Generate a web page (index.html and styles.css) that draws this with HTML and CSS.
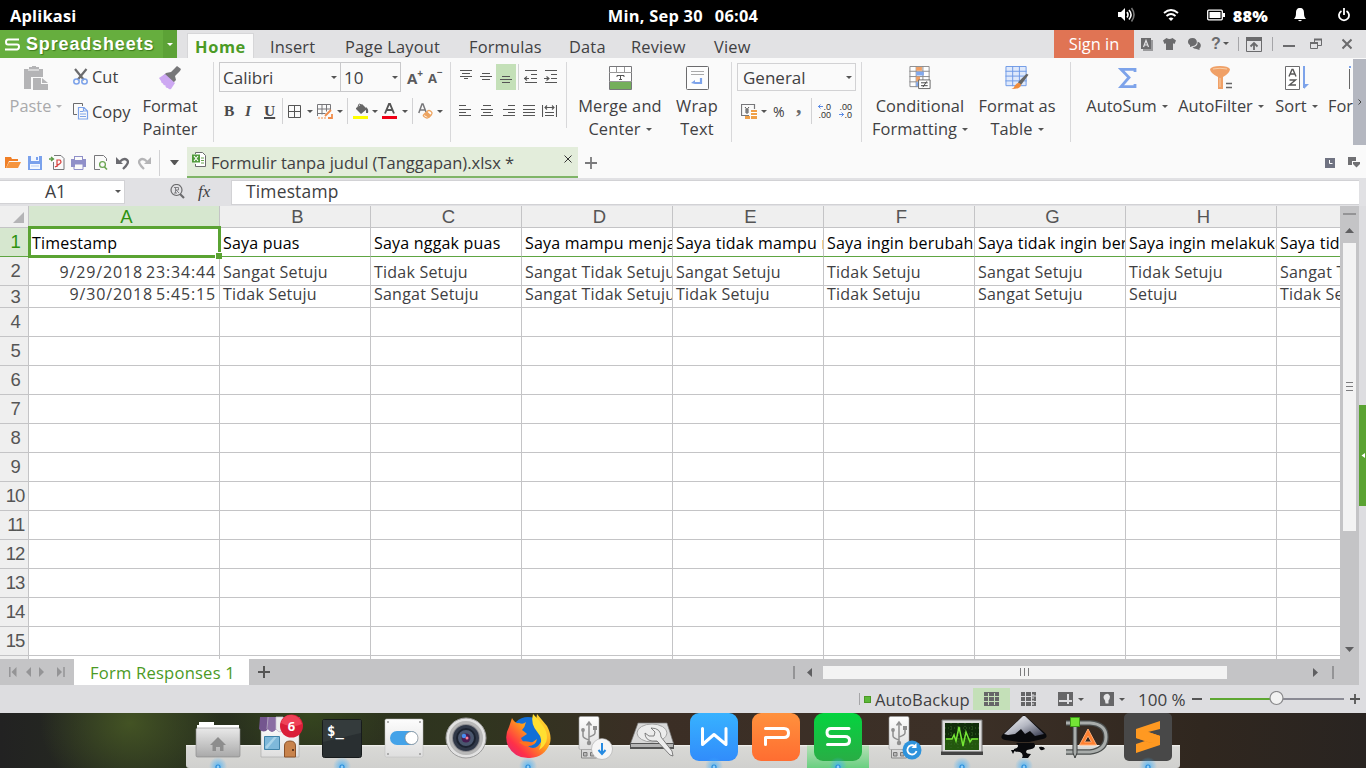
FILE: index.html
```html
<!DOCTYPE html>
<html lang="id">
<head>
<meta charset="utf-8">
<title>Spreadsheets</title>
<link rel="stylesheet" href="styles.css">
</head>
<body>
<header class="panel">
  <span class="panel-left">Aplikasi</span>
  <span class="panel-clock"><span>Min, Sep 30</span><span>06:04</span></span>
  <span class="panel-tray">
    <svg width="20" height="16" viewBox="0 0 20 16" fill="none" stroke="#fff" stroke-width="1.6"><path d="M1 5h3l4-4v13l-4-4H1z" fill="#fff" stroke="none"/><path d="M10 5q2 2.700 0 5.500M12 3q4 4.700 0 9.500"/><path d="M14.500 1q5 6.700 0 13.500" stroke="#777"/></svg>
    <svg width="16" height="16" viewBox="0 0 16 16" fill="none" stroke="#fff" stroke-width="1.900"><path d="M1 6q7-6 14 0M3.500 9q4.500-4 9 0"/><path d="M5.500 11.500q2.500-2 5 0L8 14z" fill="#fff" stroke="none"/></svg>
    <svg width="18" height="12" viewBox="0 0 18 12"><rect x=".7" y="1.200" width="14.600" height="9.600" rx="1" fill="none" stroke="#fff" stroke-width="1.300"/><path d="M2.500 3h11v6h-11z" fill="#fff"/><path d="M16 4h2v4h-2z" fill="#fff"/></svg>
    <b>88%</b>
    <svg width="12" height="16" viewBox="0 0 12 16" fill="#fff"><path d="M6 1c3 0 4 2 4 5 0 3 .5 4 2 6H0c1.500-2 2-3 2-6 0-3 1-5 4-5zM4 13h4q-2 2.500-4 0z"/></svg>
    <svg width="12" height="14" viewBox="0 0 12 14" fill="none" stroke="#fff" stroke-width="1.800"><path d="M3.500 3a5 5 0 1 0 5 0M6 0v7"/></svg>
  </span>
</header>

<nav class="titlebar">
  <div class="brand"><svg width="15" height="13" viewBox="0 0 15 13" fill="none" stroke="#fff" stroke-width="2"><path d="M14 1.500H3Q1 1.500 1 4t2 2.500h9q2 0 2 2.300T12 11.500H0"/></svg><span>Spreadsheets</span></div>
  <div class="brand-more"><i class="caret white"></i></div>
  <div class="tabs"><b class="tab-home">Home</b><span>Insert</span><span>Page Layout</span><span>Formulas</span><span>Data</span><span>Review</span><span>View</span></div>
  <div class="signin">Sign in</div>
  <div class="wintools">
    <svg width="12" height="13" viewBox="0 0 12 13"><path d="M2 2h10v11H2z" fill="#9a9a9c"/><path d="M0 0h10v11H0z" fill="#6b6b6d"/><path d="M2.500 9 5 2.500 7.500 9M3.500 7h3" fill="none" stroke="#e2e2e4" stroke-width="1.200"/></svg>
    <svg width="13" height="12" viewBox="0 0 13 12"><path d="M3.500 0q3 2 6 0L13 2.500 11.500 6 10 5.200V12H3V5.200L1.500 6 0 2.500z" fill="#6b6b6d"/></svg>
    <svg width="13" height="12" viewBox="0 0 13 12" fill="#6b6b6d"><path d="M4.500 0C10 0 10.500 7 5 8L2 9V7C-1 5.500-1 0 4.500 0z"/><path d="M9.500 3.800c4 .5 4 5.500 2 6.500v1.700l-3-1q-3 0-4-2c4 0 5.500-2.500 5-5.200z"/></svg>
    <span class="help">?<i class="caret"></i></span>
    <i class="bar"></i>
    <svg width="16" height="15" viewBox="0 0 16 15" fill="none" stroke="#6b6b6d"><path d="M.5.500h15v14H.5z"/><path d="M0 0h16v4H0z" fill="#6b6b6d" stroke="none"/><path d="M8 13V7M4.500 9.500 8 6l3.500 3.500" stroke-width="1.800"/></svg>
    <i class="bar"></i>
    <svg width="12" height="12" viewBox="0 0 12 12"><path d="M0 7h12v2H0z" fill="#6b6b6d"/></svg>
    <svg width="12" height="12" viewBox="0 0 12 12" fill="none" stroke="#6b6b6d"><path d="M4.500 4V1.500h7v6H8" /><path d="M.5 4.500h7v6h-7z"/><path d="M4 1.500h8M0 5h8" stroke-width="2"/></svg>
    <svg width="10" height="12" viewBox="0 0 10 12"><path d="M.5 1.500l9 9M9.500 1.500l-9 9" stroke="#6b6b6d" stroke-width="2"/></svg>
  </div>
</nav>

<section class="ribbon">
  <div class="group clip">
    <div class="big muted"><svg width="24" height="24" viewBox="0 0 24 24" fill="#b4b4b6"><path d="M0 3h5V1h3V0h4v1h3v2h4v8H7v12H0z"/><path d="M4 4h11" stroke="#fafafa"/><path d="M9 12h8v6h7v6H9z"/><path d="m18 12 6 5h-6z"/></svg><span>Paste<i class="caret"></i></span></div>
    <div class="pair">
      <div><svg width="16" height="18" viewBox="0 0 16 18" fill="none"><path d="M2 1l9 11M13.500 1l-9 11" stroke="#6b6b6d" stroke-width="2.200"/><ellipse cx="3.500" cy="13.500" rx="2.700" ry="2.500" stroke="#7da3ea" stroke-width="1.500"/><ellipse cx="11.500" cy="13.500" rx="2.700" ry="2.500" stroke="#7da3ea" stroke-width="1.500"/></svg>Cut</div>
      <div><svg width="16" height="17" viewBox="0 0 16 17" fill="none"><path d="M4 11.500H.5V.5h9V3" stroke="#6b6b6d"/><path d="M5.500 4.500h5.500l3.500 3.500v8h-9zM10.500 4.500V8H14M7 8.500h3M7 11h6M7 13.500h6" stroke="#7da3ea" stroke-width="1.200"/></svg>Copy</div>
    </div>
    <div class="big"><svg width="24" height="24" viewBox="0 0 24 24"><path d="m13 6 5-5 1-1 4 3-1 2-5 5 1 4-4 4-9-8 3-3z" fill="#777779"/><path d="M7 8 17 17l-4 6q-2 1-3-1h-1q-2-1-1.500-2.500Q5 19.500 5 17.500 3 17 3 15L1 12z" fill="#cda8f2"/></svg><span>Format<br>Painter</span></div>
  </div>

  <div class="group font">
    <div class="selects"><span>Calibri<i class="caret"></i></span><span>10<i class="caret"></i></span>
      <em>A<sup>+</sup></em><em class="small">A<sup>−</sup></em></div>
    <div class="tools font-tools">
      <b class="serif">B</b><i class="serif">I</i><b class="serif ul">U</b><i class="bar"></i>
      <svg width="13" height="13" viewBox="0 0 13 13"><path d="M.5.500h12v12H.5zM6.500 0v13M0 6.500h13" fill="none" stroke="#555"/></svg><i class="caret"></i>
      <svg width="16" height="15" viewBox="0 0 16 15" fill="none"><path d="M.5 12V.5h13V6M5 .5v10M9.500.5v7M.5 5h13M.5 9.500h8" stroke="#77777a"/><path d="M1 14h8" stroke="#f08c4a" stroke-dasharray="2 1"/><path d="m8 12 6-6M11 14h4v-4" stroke="#f08c4a" stroke-width="1.800"/></svg><i class="caret"></i><i class="bar"></i>
      <svg width="16" height="16" viewBox="0 0 16 16"><path d="m3 5 6-4 5 5-6 5-5-5" fill="#666"/><path d="M5 4Q6-1 8 2v3" fill="none" stroke="#666"/><path d="M13 4q3 2 2 6h-2z" fill="#666"/><path d="M0 13h15v3H0z" fill="#ff0"/></svg><i class="caret"></i>
      <svg width="16" height="16" viewBox="0 0 16 16"><path d="m3 10.500 4-9.500h1l4 9.500M4.500 7h6" fill="none" stroke="#555" stroke-width="1.900"/><path d="M0 13h15v3H0z" fill="#f00016"/></svg><i class="caret"></i><i class="bar"></i>
      <svg width="16" height="16" viewBox="0 0 16 16"><path d="M.8 10 4 1h1l3 8M2 7h5" fill="none" stroke="#77777a" stroke-width="1.500"/><path d="m5.500 12 4-4q1.500-1 3 0l1 1q1 1 0 2.500l-3 3q-1.500 1-3 0l-1.500-1q-1-1-.5-1.500z" fill="#fff" stroke="#eda460" stroke-width="1.300"/><path d="m9 8.500 4.500 4-2.500 2.500-5-3z" fill="#eda460"/></svg><i class="caret"></i>
    </div>
  </div>

  <div class="group align">
    <div class="tools align-top">
      <svg width="12" height="26"><path d="M0 6.500h12M2 9.500h8M0 12.500h12M4 14.500h4" class="ln"/></svg>
      <svg width="12" height="26"><path d="M2 9.500h8M0 12.500h12M2 15.500h8" class="ln"/></svg>
      <span class="on"><svg width="12" height="26"><path d="M2 12.500h8M0 15.500h12M2 18.500h8" class="ln"/></svg></span>
      <i class="bar"></i>
      <svg width="13" height="26"><path d="M1 6.500h12M7 10.500h6M7 14.500h6M1 18.500h12M0 14.500h5M3 12.500l-2.500 2 2.500 2" class="ln"/></svg>
      <svg width="13" height="26"><path d="M1 6.500h12M7 10.500h6M7 14.500h6M1 18.500h12M0 14.500h5M2.500 12.500l2.500 2-2.500 2" class="ln"/></svg>
    </div>
    <div class="tools align-low">
      <svg width="13" height="12"><path d="M0 .5h7M0 4.500h12M0 7.500h7M0 10.500h12" class="ln"/></svg>
      <svg width="13" height="12"><path d="M2 .5h8M0 4.500h12M2 7.500h8M0 10.500h12" class="ln"/></svg>
      <svg width="13" height="12"><path d="M5 .5h7M0 4.500h12M5 7.500h7M0 10.500h12" class="ln"/></svg>
      <svg width="13" height="12"><path d="M0 .5h12M0 4.500h12M0 7.500h12M0 10.500h12" class="ln"/></svg>
      <svg width="15" height="12"><path d="M.5 0v12M14.500 0v12M3 2.500h9M5 .500l-2 2 2 2M10 .500l2 2-2 2M3 7.500h9M3 10.500h9" class="ln"/></svg>
    </div>
  </div>

  <div class="group merge">
    <div class="big"><svg width="23" height="24" viewBox="0 0 23 24"><path d="M.5.500h22v23H.5z" fill="#fff" stroke="#77777a"/><path d="M1 16h21v7H1z" fill="#74af5a"/><path d="M0 15.500h23M0 6.500h23M7.500 1v5M15.500 1v5" stroke="#999"/><path d="M8 9.500h7v1.500M8 11V9.500M11.500 9.500v4.500M10 13.500h3" fill="none" stroke="#555"/></svg><span>Merge and<br>Center<i class="caret"></i></span></div>
    <div class="big"><svg width="23" height="24" viewBox="0 0 23 24"><rect x=".5" y=".5" width="22" height="23" rx="1" fill="#fdfdfd" stroke="#6b6b6d"/><path d="M5 5.500h13M5 8.500h13" stroke="#aaa"/><path d="M15 12v5H9" fill="none" stroke="#7da3ea" stroke-width="2.200"/><path d="m5 17 4-3v4z" fill="#7da3ea"/></svg><span>Wrap<br>Text</span></div>
  </div>

  <div class="group number">
    <div class="format-select">General<i class="caret"></i></div>
    <div class="tools number-tools">
      <svg width="17" height="17" viewBox="0 0 17 17"><path d="M8 12.500H.5v-11h13V6" fill="none" stroke="#77777a" stroke-width="1.200"/><path d="m4 4 2 2.500L8 4M6 6.500V11M4 7h4M4 9h4" fill="none" stroke="#555"/><path d="M4 13h5v3H4zM10 7h6v9h-6z" fill="#f0a048"/><path d="M10 9.500h6M10 12.500h6" stroke="#fff"/></svg><i class="caret"></i>
      <span class="pct">%</span><span class="comma">,</span><i class="bar"></i>
      <span class="dec"><svg width="5" height="5"><path d="M0 2.500h5M2.500.5l-2 2 2 2" class="arr"/></svg>.0<br>.00</span><span class="dec">.00<br><svg width="5" height="5"><path d="M0 2.500h5M2.500.5l2 2-2 2" class="arr"/></svg>.0</span>
    </div>
  </div>

  <div class="group styles">
    <div class="big"><svg width="23" height="25" viewBox="0 0 23 25"><path d="M.5.500h20v21H.5zM7 0v22M14 0v22M0 5.500h21M0 11h21M0 16.500h21" fill="#fff" stroke="#8a8a8c"/><path d="M7 1h6v4H7zM7 11h4v5H7z" fill="#f0a066"/><path d="M7 6h8v4H7zM7 17h5v4H7z" fill="#82a9ee"/><path d="M9.500 14.500h12v9h-12z" fill="#fff" stroke="#666"/><path d="M12 17.500h7M12 20.500h7M18 16l-4 6" stroke="#444"/></svg><span>Conditional<br>Formatting<i class="caret"></i></span></div>
    <div class="big"><svg width="24" height="25" viewBox="0 0 24 25"><path d="M.5.500h21v20H.5z" fill="#dfe9fb" stroke="#6d99e6"/><path d="M0 5.500h22M0 10.500h22M0 15.500h22M7.500 0v21M14.500 0v21" stroke="#6d99e6"/><path d="m13 17 9-9 2 1-8 11z" fill="#666"/><path d="M6 24q3-1 4-4 3-4 6-1 1 5-10 5z" fill="#f08c3c"/></svg><span>Format as<br>Table<i class="caret"></i></span></div>
  </div>

  <div class="group editing">
    <div class="big"><svg width="19" height="24" viewBox="0 0 19 24"><path d="M17 6V3.300H3l8 8.200L3 20.700h14V18" fill="none" stroke="#7da3ea" stroke-width="2.800"/></svg><span>AutoSum<i class="caret"></i></span></div>
    <div class="big"><svg width="23" height="24" viewBox="0 0 23 24"><path d="M0 3Q2 0 10 0t10 3q0 4-7 8v12H8V11Q0 7 0 3z" fill="#f0a066"/><path d="M3 3q7-1.500 14 0M10 12v9" stroke="#f8cfa8" fill="none"/><path d="M16 17.500h6M16 21.500h6" stroke="#666" stroke-width="1.500"/></svg><span>AutoFilter<i class="caret"></i></span></div>
    <div class="big"><svg width="24" height="24" viewBox="0 0 24 24"><path d="M.5.500h14v23H.5z" fill="#fff" stroke="#6b6b6d"/><path d="m4 10.500 3-7h1l3 7M5 8h5M4.500 14h6l-6 5h6.500" fill="none" stroke="#555" stroke-width="1.400"/><path d="M19 0v22" stroke="#7da3ea" stroke-width="2"/><path d="M19 18h5l-5 5z" fill="#7da3ea"/></svg><span>Sort<i class="caret"></i></span></div>
    <div class="big cut"><svg width="24" height="24" viewBox="0 0 24 24"><path d="M0 0h2v2H0z" fill="#7da3ea"/><path d="M.5 3v20" stroke="#666"/></svg><span>Format</span></div>
  </div>
  <div class="ribbon-next"><svg width="4" height="6"><path d="m.5.500 2.500 2.500L.5 5.500" fill="none" stroke="#444"/></svg></div>
</section>

<section class="docbar">
  <div class="quick">
    <svg width="16" height="13" viewBox="0 0 16 13"><path d="M0 1h6l1 2h6v2H4l-3 7H0z" fill="#f07f26"/><path d="M4 6h12l-3 6H1z" fill="#f6953e"/></svg>
    <svg width="14" height="14" viewBox="0 0 14 14"><path d="M0 0h14v14H0z" fill="#7aa1ec"/><path d="M3 0h8v5H3zM2 8h10v5H2z" fill="#f4f8ff"/><path d="M8 1h2v3H8z" fill="#7aa1ec"/><path d="M3 10h8" stroke="#b9cdf5"/></svg>
    <svg width="16" height="15" viewBox="0 0 16 15" fill="none"><path d="M5 .500h7l3 3v11H4.500V7" stroke="#77777a"/><path d="M0 4h4M2 2l2.500 2L2 6" stroke="#5b9a44" stroke-width="1.300"/><path d="M8 12V5h3q2 2 0 3.500L6 12" stroke="#d8403c" stroke-width="1.200"/></svg>
    <svg width="16" height="14" viewBox="0 0 16 14"><path d="M3 0h9v3h3v8H0V3h3z" fill="#8f8fc9"/><path d="M4 1h7v3H4zM1 5h13M4 8h8v5H4z" fill="#fafafa"/><path d="M0 5.500h15M3 8h9v5.500H3z" fill="none" stroke="#8f8fc9"/></svg>
    <svg width="14" height="15" viewBox="0 0 14 15" fill="none"><path d="M12.500 6V3.500l-3-3H.5v14H6" stroke="#77777a"/><circle cx="8.500" cy="9.500" r="2.900" stroke="#6aa551" stroke-width="1.300"/><path d="m10.500 12 2.500 2.500" stroke="#6aa551" stroke-width="1.600"/></svg>
    <svg width="13" height="14" viewBox="0 0 13 14" fill="none"><path d="M4 5.500q4-4 7-1.500t-4 9" stroke="#6b6b70" stroke-width="2.300"/><path d="M0 1v7h7z" fill="#6b6b70"/></svg>
    <svg width="13" height="14" viewBox="0 0 13 14" fill="none"><path d="M9 5.500Q5 1.500 2 4t4 9" stroke="#b4b4b6" stroke-width="2.300"/><path d="M13 1v7H6z" fill="#b4b4b6"/></svg>
    <i class="bar"></i><i class="caret wide"></i>
  </div>
  <div class="doc-tab">
    <svg width="14" height="15" viewBox="0 0 14 15" fill="none"><path d="M3.500 2V.500h7l3 3v11h-10V12" stroke="#6b6b6d" fill="#fff"/><path d="M0 2.500h8v8H0z" fill="#4f9a3a"/><path d="m2 4 4 5M6 4 2 9" stroke="#fff" stroke-width="1.200"/><path d="M9 6h3M9 8.500h3M9 11h3" stroke="#6aa551"/></svg>
    <span>Formulir tanpa judul (Tanggapan).xlsx *</span>
    <svg class="doc-close" width="8" height="8"><path d="m.5.500 7 7M7.500.500l-7 7" stroke="#333"/></svg>
  </div>
  <svg class="doc-add" width="12" height="12"><path d="M6 0v12M0 6h12" stroke="#7a7a7c" stroke-width="1.800"/></svg>
  <div class="doc-right">
    <svg width="10" height="10"><path d="M0 0h10v10H0z" fill="#707382"/><path d="M4.500 2v3.500H7.500" fill="none" stroke="#fff"/></svg>
    <svg width="13" height="11"><path d="M0 0h8v4H4v4H0z" fill="#707073"/><path d="M5 5h7v2L8.500 10.500 5 7z" fill="#707073"/></svg>
  </div>
</section>

<section class="formula">
  <div class="namebox"><span>A1</span><i class="caret"></i></div>
  <div class="fx"><svg width="15" height="16" viewBox="0 0 15 16" fill="none"><circle cx="6.500" cy="6" r="5.500" stroke="#6b6b6d" stroke-width="1.200"/><path d="m10 10 4 4" stroke="#6b6b6d" stroke-width="2.200"/><path d="M5.500 3v6M4 3.500h4.500v2.500H6l3 3M4 9h3" stroke="#77777a" stroke-width=".9"/></svg><em>fx</em></div>
  <div class="formula-input">Timestamp</div>
</section>

<main class="work">
  <div class="sheet" id="sheet"></div>
  <div class="vscroll">
    <i class="split"></i>
    <svg width="9" height="5"><path d="m0 5 4.500-5L9 5z" fill="#5f5f61"/></svg>
    <div class="vthumb"><i></i><i></i><i></i></div>
    <svg class="down" width="9" height="5"><path d="m0 0 4.500 5L9 0z" fill="#5f5f61"/></svg>
  </div>
  <div class="side"><div class="side-handle"><svg width="4" height="5"><path d="M4 0v5L.5 2.500z" fill="#fff"/></svg></div></div>
</main>

<section class="sheetbar">
  <div class="sheet-nav">
    <svg width="8" height="10"><path d="M.8 0v10" stroke="#949496" stroke-width="1.500"/><path d="M7.500 0v10L2.500 5z" fill="#949496"/></svg>
    <svg width="5" height="10"><path d="M5 0v10L0 5z" fill="#949496"/></svg>
    <svg width="5" height="10"><path d="M0 0v10l5-5z" fill="#949496"/></svg>
    <svg width="8" height="10"><path d="M7 0v10" stroke="#949496" stroke-width="1.500"/><path d="M0 0v10l5-5z" fill="#949496"/></svg>
  </div>
  <div class="sheet-tab">Form Responses 1</div>
  <svg class="sheet-add" width="12" height="12"><path d="M6 0v12M0 6h12" stroke="#555" stroke-width="2"/></svg>
  <div class="hscroll">
    <i class="grip"></i>
    <svg width="5" height="9"><path d="M5 0v9L0 4.500z" fill="#5f5f61"/></svg>
    <div class="hthumb"><i></i><i></i><i></i></div>
    <svg class="next" width="5" height="9"><path d="M0 0v9l5-4.500z" fill="#5f5f61"/></svg>
    <i class="grip"></i>
  </div>
</section>

<footer class="status">
  <i class="bar"></i><i class="led"></i><span class="backup">AutoBackup</span>
  <span class="view-on"><svg width="15" height="14"><path d="M0 0h15v14H0z" fill="#666668"/><path d="M0 4.500h15M0 9.500h15M4.500 1v12M10.500 1v12" stroke="#c4e0b8"/></svg></span>
  <svg width="15" height="14"><path d="M0 0h15v14H0z" fill="#666668"/><path d="M0 4.500h11M0 9.500h15M4.500 0v14M10.500 0v14M10 4h5" stroke="#dddde0"/><path d="M12 2v12" stroke="#dddde0" stroke-dasharray="2 1"/></svg>
  <svg width="15" height="14"><path d="M0 0h15v14H0z" fill="#666668"/><path d="M1 9h13M10 2v10" stroke="#dddde0" stroke-width="2"/></svg><i class="caret"></i>
  <svg width="14" height="14"><path d="M0 0h14v14H0z" fill="#666668"/><path d="M5 8.500Q2 5 5 2.500q4-2 5 2 0 2-1.500 4v3H5.500z" fill="#e6e6e8"/></svg><i class="caret"></i>
  <span class="zoomval">100 %</span>
  <svg class="slider" width="169" height="16" viewBox="0 0 169 16"><path d="M0 8h10" stroke="#555" stroke-width="2"/><path d="M18 8h66" stroke="#5ea733" stroke-width="2"/><path d="M84 8h68" stroke="#8a8a94" stroke-width="2"/><circle cx="84.500" cy="7" r="6.500" fill="#f2f2f2" stroke="#8a8a8c" stroke-width="1.200"/><path d="M158 8h10M163 3v10" stroke="#555" stroke-width="1.800"/></svg>
</footer>

<div class="desktop">
  <div class="dock">
    <svg viewBox="0 0 62 55"><defs><linearGradient id="gr" x2="0" y2="1"><stop stop-color="#e9e9e9"/><stop offset="1" stop-color="#a9a9a9"/></linearGradient><linearGradient id="wh" x2="0" y2="1"><stop stop-color="#fdfdfd"/><stop offset="1" stop-color="#dedede"/></linearGradient><radialGradient id="glow"><stop stop-color="#3ab0ff" stop-opacity=".75"/><stop offset="1" stop-color="#3ab0ff" stop-opacity="0"/></radialGradient></defs><path d="M12 9h15v3h25v10H10V12h2z" fill="#fff"/><rect x="9" y="15" width="44" height="29" rx="1.500" fill="url(#gr)" stroke="#858585" stroke-width=".6"/><path d="m31 24 8 8h-2.500v6H33v-4h-4v4h-3.500v-6H23z" fill="#8d8d8d"/><g id="run"><circle cx="31" cy="53" r="9" fill="url(#glow)"/><circle cx="31" cy="54" r="2" fill="#8fd0fb" stroke="#2a8cd8" stroke-width="1.200"/></g></svg>
    <svg viewBox="0 0 62 55"><path d="M12 12h38v32H12z" fill="url(#wh)" stroke="#999" stroke-width=".5"/><path d="M11 4h40v12q-4 5-8 0-4 5-8 0-4 5-8 0-4 5-8 0-4 5-9 0z" fill="#74568f"/><path d="M19 4h8v12q-4 6-8 0zM35 4h-8v12q4 6 8 0z" fill="#8a6da3"/><path d="M27 4h7l1 12q-4 6-8 0zM19 4l-1 12" fill="#ececec" stroke="#c9c2d2" stroke-width=".7"/><path d="M15.500 23.500h15v13h-15z" fill="#7eb8da" stroke="#3f82a8"/><path d="m16 34 9-10h3L18 36" fill="#a8d3e9"/><path d="M35.500 44V33q0-5 5.500-5t5.500 5v11z" fill="#c8834c" stroke="#8a522a"/><circle cx="44" cy="37" r="1" fill="#402010"/><circle cx="42.500" cy="13" r="11.500" fill="#da1e38"/><path d="M32 10q3-9 11-8t10 9q-11 5-21-1" fill="#ef4258"/><text x="42.500" y="17.500" class="badge">6</text></svg>
    <svg viewBox="0 0 62 55"><rect x="11.500" y="6.500" width="39" height="38" rx="2" fill="#292f31" stroke="#171b1c"/><path d="M12 7h38v13L12 29z" fill="#343b3c"/><text x="16" y="23" class="term">$_</text><use href="#run"/></svg>
    <svg viewBox="0 0 62 55"><rect x="12" y="6" width="38" height="38" rx="1.500" fill="url(#wh)" stroke="#bbb" stroke-width=".5"/><g fill="#999"><circle cx="15" cy="9" r="1"/><circle cx="47" cy="9" r="1"/><circle cx="15" cy="41" r="1"/><circle cx="47" cy="41" r="1"/></g><rect x="17" y="18" width="28" height="14" rx="7" fill="#43a2e8"/><circle cx="38.500" cy="25" r="6.500" fill="#fff" stroke="#888" stroke-width=".7"/></svg>
    <svg viewBox="0 0 62 55"><circle cx="31" cy="25" r="20" fill="#e2e2e2" stroke="#9c9c9c"/><circle cx="31" cy="25" r="15.500" fill="#8e8e92" stroke="#b8b8b8" stroke-width="3"/><circle cx="31" cy="25" r="13" fill="#303848"/><circle cx="31" cy="25" r="9" fill="#49566e" stroke="#1b2230" stroke-width="2"/><circle cx="31" cy="25" r="4.500" fill="#471d52"/><circle cx="29" cy="23" r="2.200" fill="#4a8df0"/><circle cx="32" cy="25" r="1.500" fill="#ff7c92"/></svg>
    <svg viewBox="0 0 62 55"><defs><linearGradient id="ff" x1="1" y1="0" x2="0" y2="1"><stop stop-color="#fff03c"/><stop offset=".45" stop-color="#ff9a1c"/><stop offset=".75" stop-color="#ff3147"/><stop offset="1" stop-color="#d51f86"/></linearGradient></defs><circle cx="31" cy="21" r="17" fill="#126fd8"/><path d="M15 5q3 6 7 5 4 2 7-1-1 5-4 8 3 2 5 4l-6 4q2 6 8 5 5-1 8-4-1 7-9 7 5 4 10 0 6-6 3-14-7-4-5-11l1-7 5 6 5 6q5 9 3 17-5 14-20 15T11 33q-4-10 1-19z" fill="url(#ff)"/><path d="M36 1q8 8 12 15 6 13-6 21 5-11-1-17-8-9-5-19z" fill="#ffdf32"/><path d="M22 29q8-2 14 1-5 7-14-1z" fill="#ff721f"/><use href="#run"/></svg>
    <svg viewBox="0 0 62 55"><g id="usb" transform="translate(11)"><path d="M11.500 36h15v9h-15z" fill="#d8d8d8" stroke="#888"/><path d="M13.500 39.500h3.500v3.500h-3.500zM20.500 39.500h3.500v3.500h-3.500z" fill="#b7b7b7" stroke="#777"/><rect x="9" y="3.500" width="20" height="33" rx="1.500" fill="url(#wh)" stroke="#999" stroke-width=".6"/><path d="M19 10v20M13 17v6q0 2 6 4M25 15v5q0 2-6 4M16.500 12.500 19 9l2.500 3.500" fill="none" stroke="#8f8f8f" stroke-width="1.500"/><circle cx="19" cy="30" r="2.200" fill="#8f8f8f"/><circle cx="13" cy="17" r="1.900" fill="#8f8f8f"/><path d="M23 13h4v4h-4z" fill="#8f8f8f"/></g><circle cx="43" cy="36" r="10.500" fill="#f6f6f6" stroke="#aaa" stroke-width=".6"/><path d="M43 30v10M39.500 37l3.500 4 3.500-4" fill="none" stroke="#268be2" stroke-width="2"/></svg>
    <svg viewBox="0 0 62 55"><path d="M17 10h29l7 22H9z" fill="#d9d9d9" stroke="#777" stroke-width=".7"/><path d="M9 30h44v6H9z" fill="#555"/><path d="M10 31h42v3H10z" fill="#b5b5b5"/><ellipse cx="31" cy="20" rx="15" ry="9" fill="#ececec" stroke="#a6a6a6"/><path d="m30 15 4 4-1 4-5 0-4-3q0 7 7 8l5 0 13 14 3 1-1-5-11-14q0-9-10-9z" fill="#ededed" stroke="#666" stroke-width=".8"/></svg>
    <svg viewBox="0 0 62 55"><defs><linearGradient id="w" x2="0" y2="1"><stop stop-color="#37b2ff"/><stop offset="1" stop-color="#318cfb"/></linearGradient><linearGradient id="p" x2="0" y2="1"><stop stop-color="#ff913d"/><stop offset="1" stop-color="#ff6d31"/></linearGradient><linearGradient id="s" x2="0" y2="1"><stop stop-color="#04d43f"/><stop offset="1" stop-color="#29ad45"/></linearGradient></defs><rect x="7" y="0" width="48" height="48" rx="9" fill="url(#w)"/><path d="M19.500 15.500v16L31 21.500l12 10v-16" class="wps"/><use href="#run"/></svg>
    <svg viewBox="0 0 62 55"><rect x="7" y="0" width="48" height="48" rx="9" fill="url(#p)"/><path d="M20.500 15.500H39q4.500 0 4.500 4.500t-4.500 4.500H20.500v7" class="wps"/></svg>
    <svg viewBox="0 0 62 55" class="active"><rect x="7" y="0" width="48" height="48" rx="9" fill="url(#s)"/><path d="M42 15.500H24q-4 0-4 4t4 4h14q4.500 0 4.500 4t-4.500 4H20.500" class="wps"/><use href="#run"/></svg>
    <svg viewBox="0 0 62 55"><use href="#usb"/><circle cx="43" cy="37" r="9.500" fill="#2e93dc"/><path d="M47.500 38a4.600 4.600 0 1 1-2-5" fill="none" stroke="#fff" stroke-width="1.800"/><path d="M47.500 30v5h-5z" fill="#fff"/></svg>
    <svg viewBox="0 0 62 55"><path d="M11 7h40v33H11z" fill="#dcdcdc" stroke="#777"/><path d="M10 38.500h42V42H10z" fill="#444"/><path d="M14 10h34v27H14z" fill="#102c0a"/><path d="M14 25h34v12H14z" fill="#23580e"/><path d="M14 15h34M14 21h34M14 31h34M20 10v27M27 10v27M34 10v27M41 10v27" stroke="#346425" stroke-dasharray="1 2"/><path d="M15 26h6l2-4 2 6 3-14 4 19 3-14 4 10 2-3h6" fill="none" stroke="#75e635" stroke-width="1.500"/><use href="#run"/></svg>
    <svg viewBox="0 0 62 55"><defs><linearGradient id="ink" x2="1" y2="1"><stop stop-color="#fff"/><stop offset=".5" stop-color="#b4b7c2"/><stop offset="1" stop-color="#33374c"/></linearGradient></defs><path d="M31 2 52 20q4 4-2 6L36 29H26L12 27q-6-2-2-6z" fill="#090a0d"/><path d="M30 3h2l19 18-9 2-5-5-5 3-4-5-6 5-7 1-4-1z" fill="url(#ink)"/><path d="M23 30h18q4 6-7 7-3 4 4 4l-3 4h-6q2-4-2-6-7 0-6-3 7-2 2-6zM46 34q5-1 6 2-5 3-6-2zM18 37h4l-2 4z" fill="#090a0d"/><use href="#run"/></svg>
    <svg viewBox="0 0 62 55"><path d="M11 10h24q16 1 16 14T35 39H11" fill="none" stroke="#4b4f4e" stroke-width="5.500"/><path d="M11 10h24q16 1 16 14T35 39H11" fill="none" stroke="#a9adab" stroke-width="3"/><path d="M18 8h4v32l-2 5-2-5z" fill="#a9adab" stroke="#3c3f3e"/><path d="M15.500 4.500h9v9h-9z" fill="#74e436" stroke="#3b9b16"/><path d="M33 16 24.500 32h17zM33 23l-3.500 6h7z" fill="#ff8130" fill-rule="evenodd" stroke="#ffad77"/></svg>
    <svg viewBox="0 0 62 55"><rect x="7" y="0" width="48" height="48" rx="5" fill="#484848"/><path d="m31 19 12 4v9l-24 8v-9l12-4z" fill="#ff9921"/><path d="m19 25 12-6 12 4-9 7z" fill="#e48018"/><path d="m43 8-24 8v9l15 5 9-4v-3l-12-4 12-3z" fill="#ff9921"/><use href="#run"/></svg>
  </div>
</div>
<script src="sheet.js"></script>
</body>
</html>
```
FILE: styles.css
```css
* { box-sizing: border-box; }
body { margin: 0; width: 1366px; height: 768px; overflow: hidden; background: #fafafa; color: #404042; font: 16.4px/23px "Open Sans", "Noto Sans", sans-serif; }
svg { display: block; flex: none; }
i, em { font-style: normal; }
.bar { display: block; width: 1px; height: 26px; background: #d2d2d4; }
.caret { display: inline-block; width: 6px; height: 3px; border: solid transparent; border-width: 3px 3px 0; border-top-color: #555; vertical-align: 4px; }
.caret.white { border-top-color: #fff; }
.caret.wide { border-width: 5px 4.5px 0; width: 9px; height: 5px; }

.panel { height: 30px; padding: 0 16px 0 10px; display: grid; grid-template-columns: 1fr auto 1fr; align-items: center; background: #000; color: #fff; font-weight: 700; font-size: 16.4px; }
.panel-left { letter-spacing: .2px; }
.panel-clock { display: flex; gap: 12px; letter-spacing: .25px; padding-left: 6px; }
.panel-tray { display: flex; align-items: center; justify-content: flex-end; }
.panel-tray svg:nth-child(2) { margin-left: 26px; }
.panel-tray svg:nth-child(3) { margin-left: 28px; }
.panel-tray b { margin-left: 8px; letter-spacing: .2px; }
.panel-tray svg:nth-child(5) { margin-left: 26px; }
.panel-tray svg:nth-child(6) { margin-left: 32px; }

.titlebar { height: 28px; display: flex; background: #e2e2e4; }
.brand { width: 163px; display: flex; align-items: center; gap: 6px; padding-left: 5px; background: #66ae3e; color: #fff; font: bold 18px/27px "Liberation Sans", sans-serif; letter-spacing: .85px; text-shadow: 1px 1px 1px #3d7a1c; }
.brand-more { width: 14px; background: #5ca236; display: flex; align-items: center; justify-content: center; }
.tabs { flex: 1; display: grid; grid-template-columns: 67px 75px 124px 100px 62px 83px 60px; padding: 3px 0 0 10px; gap: 0; }
.tabs > * { padding: 2px 0 0 16px; white-space: nowrap; height: 25px; letter-spacing: .18px; }
.tabs .tab-home { padding: 1px 0 0 7px; background: #fafafa; border: solid #d6d6d8; border-width: 1px 1px 0; color: #4b9a25; letter-spacing: .6px; }
.signin { width: 80px; background: #e07454; color: #fff; text-align: center; line-height: 28px; }
.wintools { width: 232px; display: grid; grid-template-columns: 22px 25px 23px 27px 8px 26px 11px 27px 32px 10px; padding-left: 7px; align-items: center; }
.help { font: bold 16px "Liberation Sans", sans-serif; color: #6b6b6d; }
.help .caret { margin-left: 2px; }
.wintools .bar { height: 14px; background: #a5a5a8; }

.ribbon { height: 89px; display: flex; }
.group { height: 80px; margin-top: 4px; border-right: 1px solid #d8d8da; display: flex; flex: none; }
.big { display: flex; flex-direction: column; align-items: center; gap: 5px; padding-top: 4px; text-align: center; white-space: nowrap; }
.big svg { height: 24px; }
.big > span { margin-top: -1px; }
.big .caret { margin-left: 5px; }
.muted { color: #a9a9ab; }
.muted .caret { border-top-color: #b4b4b6; }
.clip { width: 214px; }
.clip > :first-child { width: 72px; }
.clip > :last-child { width: 64px; }
.pair { width: 66px; display: flex; flex-direction: column; gap: 12px; padding: 3px 0 0 1px; }
.pair div { display: flex; align-items: center; gap: 3px; white-space: nowrap; }
.font { width: 237px; flex-direction: column; }
.selects { display: flex; padding-left: 5px; height: 30px; }
.selects span { display: flex; justify-content: space-between; align-items: center; width: 122px; border: 1px solid #c9c9cb; padding: 0 3px; background: #fafafa; font-size: 17px; }
.selects span + span { width: 61px; margin-left: -1px; padding-right: 2px; }
.selects em { font: bold 15px/32px "Open Sans", sans-serif; color: #5a5a5c; margin-left: 6px; width: 15px; white-space: nowrap; }
.selects em.small { font-size: 13px; margin-left: 6px; }
.selects sup { font-size: 10px; line-height: 0; vertical-align: 7px; }
.tools { display: grid; align-items: center; }
.font-tools { height: 38px; padding-left: 10px; grid-template-columns: 20px 20px 18px 6px 19px 10px 20px 10px 6px 19px 10px 20px 10px 6px 19px 8px; }
.serif { font: bold 15.5px/18px "Liberation Serif", serif; color: #4a4a4c; }
i.serif { font-style: italic; padding-left: 1px; }
.ul { text-decoration: underline; text-decoration-thickness: 2px; }
.align { width: 116px; height: 66px; flex-direction: column; }
.ln { fill: none; stroke: #555; stroke-width: 1.1; }
.align-top { padding: 2px 0 0 9px; grid-template-columns: 20px 16px 22px 6px 20px 14px; }
.on { display: block; width: 20px; padding-left: 4px; background: #c4e0b8; }
.align-low { padding: 15px 0 0 8px; grid-template-columns: 22px 22px 20px 19px 15px; }
.merge { width: 165px; }
.merge > :first-child { width: 92px; margin-left: 7px; letter-spacing: .15px; }
.merge > :last-child { width: 52px; margin-left: 5px; letter-spacing: .2px; }
.number { width: 130px; flex-direction: column; }
.format-select { width: 119px; height: 28px; margin: 1px 0 0 5px; border: 1px solid #d2d2d4; display: flex; align-items: center; justify-content: space-between; padding: 0 3px 0 5px; font-size: 17px; }
.number-tools { height: 40px; padding-left: 9px; grid-template-columns: 20px 12px 23px 15px 7px 21px 14px; }
.pct { font-size: 14px; }
.comma { font: bold 22px/10px "Liberation Serif", serif; padding-bottom: 10px; color: #6b6b6d; }
.dec { font: 9px/8px "Liberation Sans", sans-serif; white-space: nowrap; text-align: right; width: 13px; color: #333; }
.dec svg { display: inline-block; vertical-align: 1px; }
.arr { fill: none; stroke: #5b8be6; }
.styles { width: 209px; }
.styles > :first-child { width: 102px; margin-left: 7px; letter-spacing: .1px; }
.styles > :last-child { width: 86px; margin-left: 3px; letter-spacing: .1px; }
.editing { width: 282px; border: 0; padding-left: 8px; }
.editing > :nth-child(1) { width: 96px; }
.editing > :nth-child(2) { width: 92px; }
.editing > :nth-child(3) { width: 59px; }
.editing .cut { width: 25px; margin-left: 2px; overflow: hidden; align-items: flex-start; }
.cut svg { margin-left: 21px; }
.ribbon-next { width: 13px; height: 86px; margin-top: 1px; background: #b4b7c0; display: flex; align-items: center; justify-content: center; }

.docbar { height: 31px; display: flex; align-items: center; }
.quick { width: 187px; padding-left: 5px; display: grid; grid-template-columns: 23px 21px 22px 23px 22px 22px 21px 11px 9px; align-items: center; }
.doc-tab { width: 391px; height: 31px; background: #e3eddb; border-bottom: 2px solid #7fb567; display: flex; align-items: center; padding-left: 5px; }
.doc-tab svg { margin-bottom: 5px; }
.doc-tab span { flex: 1; margin: 2px 0 0 5px; font-size: 16.5px; white-space: nowrap; }
.doc-tab .doc-close { margin-right: 6px; }
.doc-add { margin-left: 7px; }
.doc-right { margin-left: auto; margin-right: 5px; display: flex; gap: 13px; align-items: center; }

.formula { height: 28px; background: #e1e1e4; display: flex; align-items: flex-start; padding-top: 2px; }
.namebox { width: 125px; height: 24px; background: #fff; border: 1px solid #d2d2d5; border-left: 0; display: flex; align-items: center; justify-content: space-between; padding: 0 3px 2px 45px; font-size: 17.6px; }
.fx { width: 106px; height: 24px; display: flex; align-items: center; padding-left: 45px; gap: 13px; }
.fx em { font: italic 17px "Liberation Serif", serif; }
.formula-input { width: 1128px; height: 25px; background: #fff; border: 1px solid #d2d2d5; border-right: 0; padding-left: 14px; font-size: 17.4px; letter-spacing: .2px; line-height: 21px; }

.work { height: 453px; display: flex; }
.sheet { width: 1340px; overflow: hidden; background: #fff; }
.row { display: grid; grid-template-columns: 29px 191px repeat(7, 151px) 64px; grid-template-rows: 100%; height: 29px; }
.row > * { border: solid #c4c4c6; border-width: 0 1px 1px 0; overflow: hidden; white-space: nowrap; padding-left: 3px; line-height: 30px; font-size: 16px; letter-spacing: .22px; }
.row > :last-child { border-right: 0; }
.row .num { background: #efefef; font: 18.5px/28px "Liberation Sans", sans-serif; padding: 0 7px 0 0; text-align: right; color: #555; }
.row .two { letter-spacing: -1.2px; padding-right: 4px; }
.row.cols { height: 22px; }
.cols > * { background: #efefef; font: 18.5px/22px "Liberation Sans", sans-serif; color: #555; text-align: center; padding: 0 0 0 5px; }
.cols > :first-child { display: flex; align-items: flex-end; justify-content: flex-end; padding: 0 4px 4px 0; }
.row.cols > .sel, .row > .num.sel { background: #d6e7cf; color: #2e9210; }
.row.head > * { border-bottom-color: #5ea542; color: #000; letter-spacing: .2px; }
.head .picked { position: relative; overflow: visible; }
.picked::before { content: ""; position: absolute; inset: -2px -2px -2px -1px; border: 3px solid #5aa332; }
.picked::after { content: ""; position: absolute; right: -3px; bottom: -3px; width: 6px; height: 6px; background: #5aa332; border: solid #fff; border-width: 1px 0 0 1px; }
.row.short { height: 22px; }
.row.short > * { line-height: 17px; }
.row.short .num { line-height: 22px; }
.row .right { text-align: right; padding-right: 3px; letter-spacing: .85px; word-spacing: -2px; }
.vscroll { width: 19px; background: #c4c4c6; display: flex; flex-direction: column; align-items: center; }
.split { width: 13px; height: 2px; background: #949496; margin: 7px 0 13px; }
.vthumb { width: 13px; height: 288px; background: #f3f3f3; margin-top: 10px; display: flex; flex-direction: column; gap: 3px; align-items: center; justify-content: center; padding-bottom: 2px; }
.vthumb i { width: 7px; height: 1px; background: #7c7c7e; }
.vscroll .down { margin: auto 0 7px; }
.side { width: 7px; background: #dddde0; padding-top: 199px; }
.side-handle { height: 101px; background: #5aa332; display: flex; align-items: center; justify-content: center; }

.sheetbar { height: 26px; display: flex; align-items: center; background: #c4c4c6; border-right: 7px solid #dddde0; }
.sheet-nav { width: 74px; padding-left: 9px; display: grid; grid-template-columns: 17px 13px 18px 8px; }
.sheet-tab { width: 175px; height: 26px; padding-left: 2px; background: #fff; color: #4b9a25; text-align: center; line-height: 28px; font-size: 16.6px; letter-spacing: .2px; white-space: nowrap; }
.sheet-add { margin-left: 9px; }
.hscroll { display: flex; align-items: center; margin-left: 523px; width: 542px; flex: none; }
.grip { width: 2px; height: 13px; background: #949496; }
.hscroll > svg { margin-left: 12px; }
.hthumb { width: 404px; height: 13px; background: #f3f3f3; margin-left: 11px; display: flex; gap: 3px; align-items: center; justify-content: center; padding-right: 2px; }
.hthumb i { width: 1px; height: 8px; background: #7c7c7e; }
.hscroll > .next { margin: 0 14px 0 86px; }

.status { height: 28px; background: #dddde0; display: flex; align-items: center; padding-left: 859px; }
.status .bar { height: 12px; background: #a5a5a8; margin-right: 4px; }
.led { width: 7px; height: 7px; background: #5cb83a; border: 1px solid #4b9a25; }
.backup { width: 102px; padding: 1px 0 0 4px; font-size: 16.6px; letter-spacing: .12px; }
.view-on { width: 37px; height: 22px; background: #c4e0b8; display: flex; align-items: center; justify-content: center; margin-right: 11px; }
.status > svg + svg { margin-left: 22px; }
.status .caret { margin: 0 16px 0 5px; }
.zoomval { width: 54px; font-size: 17px; margin-left: -3px; white-space: nowrap; }

.desktop { height: 55px; padding-left: 186px; background: radial-gradient(ellipse 90px 75px at 130px 10px, #435324, transparent), radial-gradient(ellipse 80px 50px at 310px 0, #36461f, transparent), linear-gradient(90deg, #222 0, #28301e 14%, #30351f 35%, #3b2e25 48%, #3c3027 70%, #30271f 88%, #292421); }
.dock { width: 994px; height: 55px; display: flex; padding-left: 1px; background: linear-gradient(transparent 32px, #f2f2ef 32px, #d9d9d6 34px, #d0d0ce); border-radius: 3px; }
.dock svg { width: 62px; height: 55px; }
.dock .active { background: linear-gradient(transparent 32px, #b4dfb5 33px, #69cf80); }
.wps { fill: none; stroke: #fff; stroke-width: 3; stroke-linejoin: round; stroke-linecap: round; }
.badge { font: bold 13px "Open Sans", sans-serif; fill: #fff; text-anchor: middle; }
.term { font: bold 14px "DejaVu Sans Mono", monospace; fill: #fff; }
```
FILE: sheet.js
```js
const letters = ["A", "B", "C", "D", "E", "F", "G", "H", ""];
const rows = [
  ["Timestamp", "Saya puas", "Saya nggak puas", "Saya mampu menjadi", "Saya tidak mampu menjadi", "Saya ingin berubah", "Saya tidak ingin berubah", "Saya ingin melakukan", "Saya tidak ingin"],
  ["9/29/2018 23:34:44", "Sangat Setuju", "Tidak Setuju", "Sangat Tidak Setuju", "Sangat Setuju", "Tidak Setuju", "Sangat Setuju", "Tidak Setuju", "Sangat Tidak Setuju"],
  ["9/30/2018 5:45:15", "Tidak Setuju", "Sangat Setuju", "Sangat Tidak Setuju", "Tidak Setuju", "Tidak Setuju", "Sangat Setuju", "Setuju", "Tidak Setuju"]
];
const sheet = document.getElementById("sheet");
const corner = '<div><svg width="11" height="11"><path d="M11 0v11H0z" fill="#b4b4b6"/></svg></div>';
let html = '<div class="row cols">' + corner + letters.map((l, i) => `<div${i ? "" : ' class="sel"'}>${l}</div>`).join("") + "</div>";
for (let r = 1; r <= 16; r++) {
  const data = rows[r - 1] || letters.map(() => "");
  const kind = r === 1 ? " head" : r === 3 ? " short" : "";
  html += `<div class="row${kind}"><div class="num${r === 1 ? " sel" : ""}${r > 9 ? " two" : ""}">${r}</div>`;
  html += data.map((t, i) => `<div class="${i ? "" : r === 1 ? "picked" : "right"}">${t}</div>`).join("") + "</div>";
}
sheet.innerHTML = html;
```
